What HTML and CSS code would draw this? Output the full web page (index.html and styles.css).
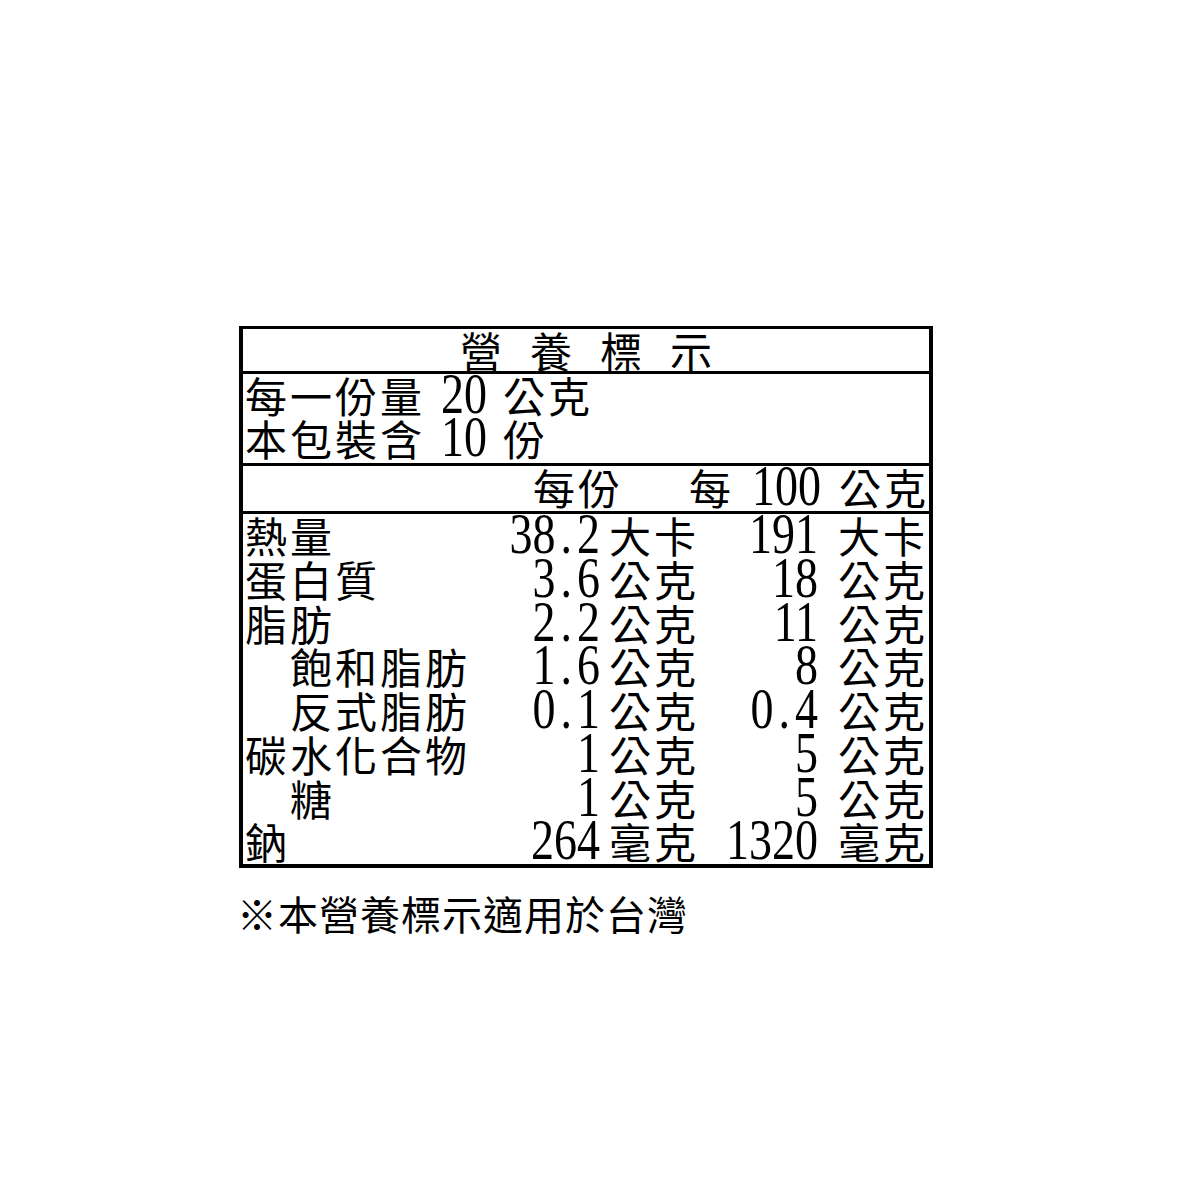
FILE: index.html
```html
<!DOCTYPE html>
<html lang="zh-Hant">
<head>
<meta charset="utf-8">
<title>營養標示</title>
<link rel="stylesheet" href="styles.css">
</head>
<body>
<div class="page">
  <div class="label">
    <div class="title">營養標示</div>
    <div class="serving">
      <div class="line"><span class="cjk">每一份量</span><span class="n">20</span><span class="cjk">公克</span></div>
      <div class="line"><span class="cjk">本包裝含</span><span class="n">10</span><span class="cjk">份</span></div>
    </div>
    <div class="head">
      <div class="h1 cjk">每份</div>
      <div class="h2"><span class="cjk">每</span><span class="n">100</span><span class="cjk">公克</span></div>
    </div>
    <div class="facts">
      <div class="lab">熱量</div><div class="num"><span class="n">38<span class="dot">.</span>2</span></div><div class="unit u1">大卡</div><div class="num"><span class="n">191</span></div><div class="unit u2">大卡</div>
      <div class="lab">蛋白質</div><div class="num"><span class="n">3<span class="dot">.</span>6</span></div><div class="unit u1">公克</div><div class="num"><span class="n">18</span></div><div class="unit u2">公克</div>
      <div class="lab">脂肪</div><div class="num"><span class="n">2<span class="dot">.</span>2</span></div><div class="unit u1">公克</div><div class="num"><span class="n">11</span></div><div class="unit u2">公克</div>
      <div class="lab sub">飽和脂肪</div><div class="num"><span class="n">1<span class="dot">.</span>6</span></div><div class="unit u1">公克</div><div class="num"><span class="n">8</span></div><div class="unit u2">公克</div>
      <div class="lab sub">反式脂肪</div><div class="num"><span class="n">0<span class="dot">.</span>1</span></div><div class="unit u1">公克</div><div class="num"><span class="n">0<span class="dot">.</span>4</span></div><div class="unit u2">公克</div>
      <div class="lab">碳水化合物</div><div class="num"><span class="n">1</span></div><div class="unit u1">公克</div><div class="num"><span class="n">5</span></div><div class="unit u2">公克</div>
      <div class="lab sub">糖</div><div class="num"><span class="n">1</span></div><div class="unit u1">公克</div><div class="num"><span class="n">5</span></div><div class="unit u2">公克</div>
      <div class="lab">鈉</div><div class="num"><span class="n">264</span></div><div class="unit u1">毫克</div><div class="num"><span class="n">1320</span></div><div class="unit u2">毫克</div>
    </div>
  </div>
  <p class="note">※本營養標示適用於台灣</p>
</div>
</body>
</html>
```
FILE: styles.css
```css
* {
  box-sizing: border-box;
}

html, body {
  margin: 0;
  background: #ffffff;
  color: #000000;
}

body {
  font-family: "Liberation Serif", "Noto Sans CJK TC", serif;
  font-size: 42px;
  font-weight: 400;
}

.page {
  padding: 326px 0 0 239px;
}

.label {
  width: 694px;
  border: 4px solid #000;
  border-top-width: 3px;
}

.cjk,
.lab,
.unit {
  letter-spacing: 3px;
}

.title {
  height: 45px;
  line-height: 42px;
  padding: 4px 0 0 28px;
  text-align: center;
  letter-spacing: 28px;
  border-bottom: 3px solid #000;
  white-space: nowrap;
}

.serving {
  height: 92px;
  padding: 4px 0 0 2px;
  border-bottom: 3px solid #000;
}

.line {
  display: flex;
  align-items: baseline;
  gap: 16px;
  height: 43px;
  line-height: 43px;
  white-space: nowrap;
}

.n {
  display: inline-block;
  font-size: 46px;
  font-weight: 400;
  letter-spacing: 0;
  line-height: 0.7;
  transform: scaleY(1.25);
  transform-origin: 50% 98%;
}

.dot {
  padding: 0 5px;
}

.head,
.facts {
  display: grid;
  grid-template-columns: 255px 100px 100px 118px 111px;
  padding-left: 2px;
  white-space: nowrap;
}

.head {
  height: 48px;
  grid-template-rows: 45px;
  line-height: 45px;
  border-bottom: 3px solid #000;
}

.head > div {
  padding-top: 3px;
}

.h1 {
  grid-column: 2 / 4;
  grid-row: 1;
  padding-left: 33px;
}

.h2 {
  grid-column: 3 / 6;
  grid-row: 1;
  display: flex;
  justify-content: flex-end;
  align-items: baseline;
  gap: 18px;
}

.facts {
  grid-auto-rows: 43.75px;
  line-height: 43.75px;
}

.facts > div {
  padding-top: 4px;
}

.facts > .lab.sub {
  padding-left: 45px;
}

.num {
  text-align: right;
}

.facts > .u1 {
  padding-left: 9px;
}

.facts > .u2 {
  padding-left: 20px;
}

.note {
  margin: 29px 0 0 -2px;
  font-size: 40px;
  line-height: 40px;
  letter-spacing: 1px;
  white-space: nowrap;
}
```
